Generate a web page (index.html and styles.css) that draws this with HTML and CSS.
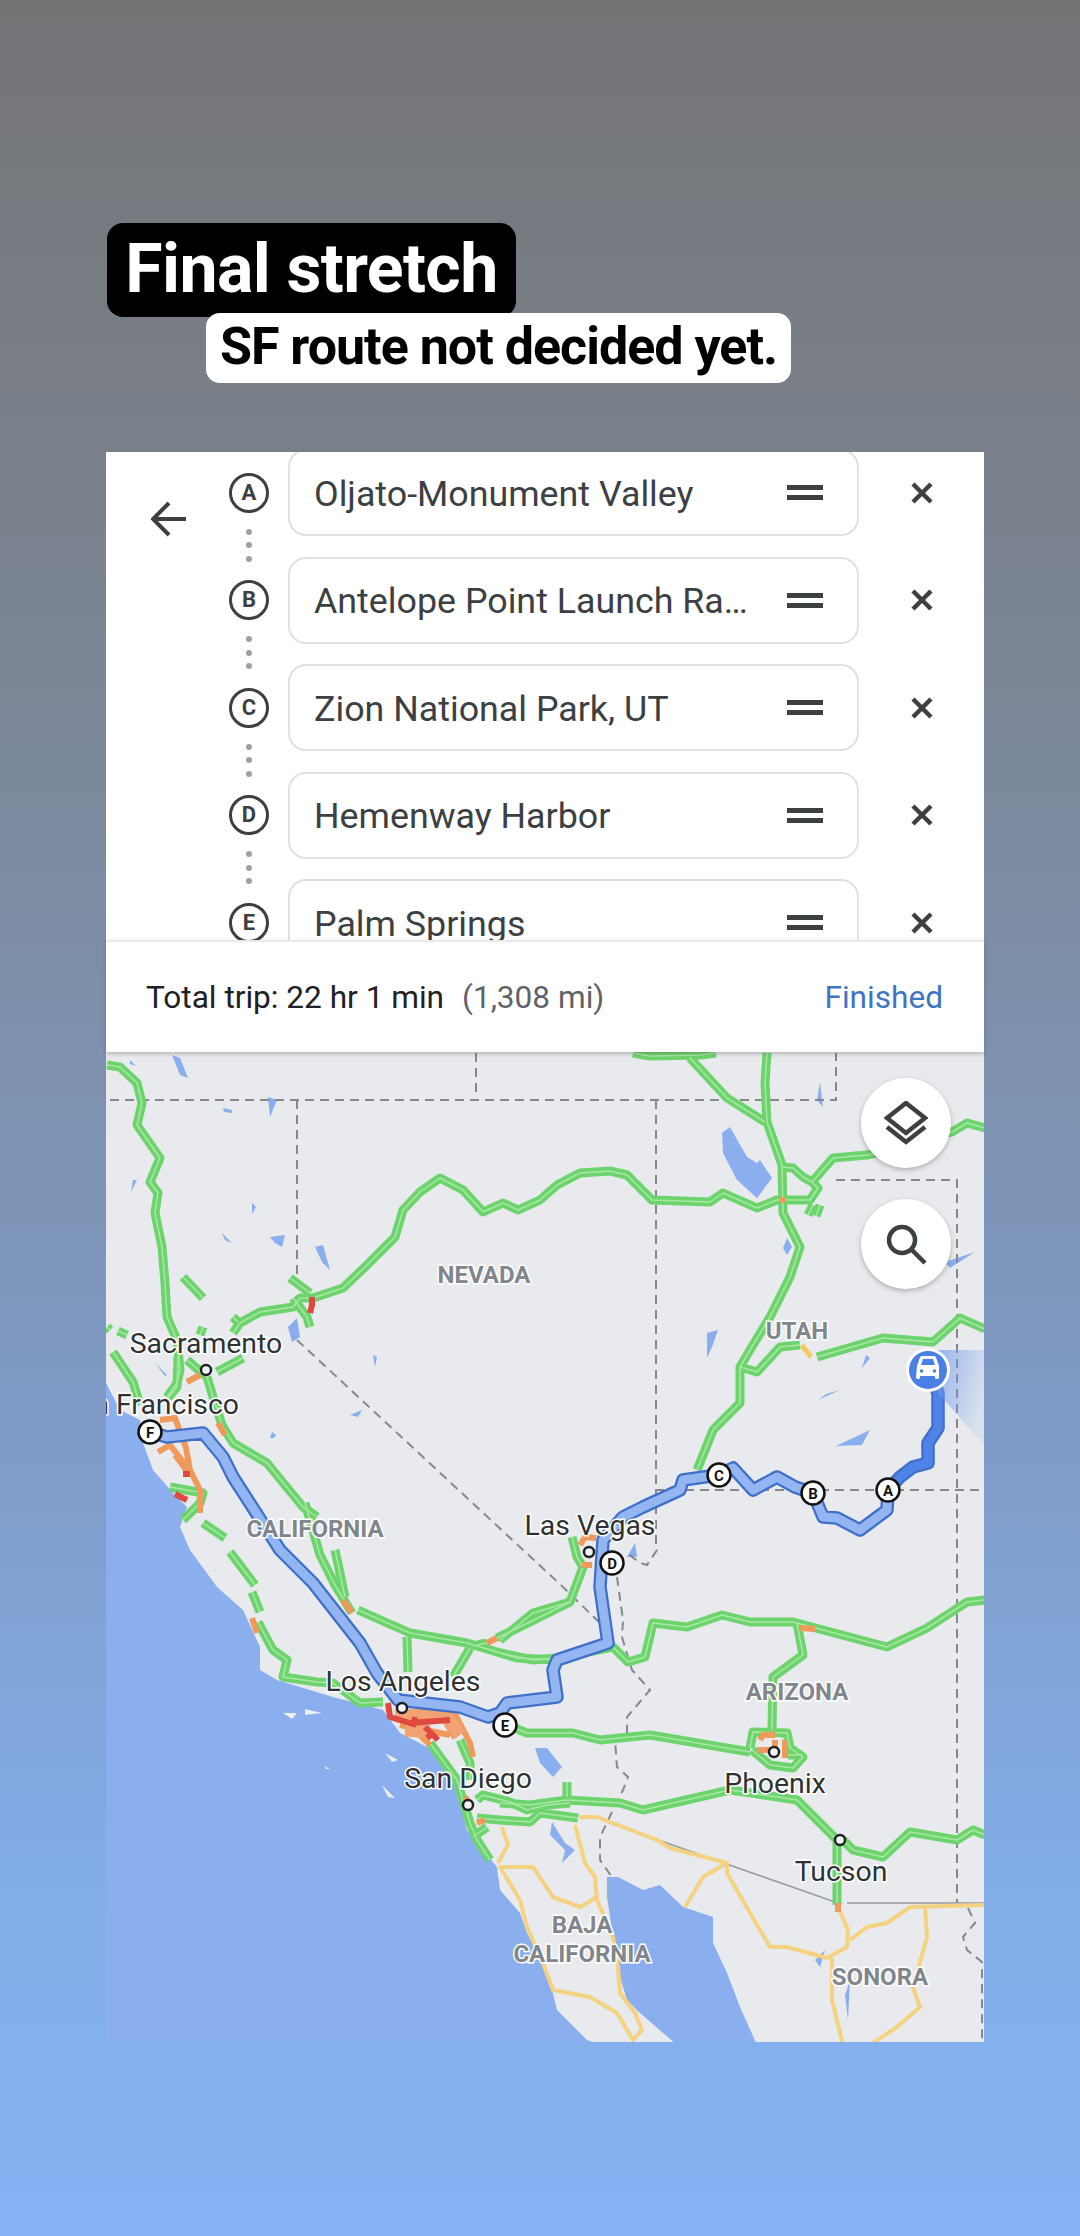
FILE: index.html
```html
<!DOCTYPE html>
<html lang="en">
<head>
<meta charset="utf-8">
<title>Final stretch</title>
<link rel="stylesheet" href="styles.css">
</head>
<body>
<main class="story">
  <h1 class="title">Final stretch</h1>
  <p class="subtitle">SF route not decided yet.</p>
  <section class="panel">
    <div class="planner">
      <div class="back">
        <svg class="back-icon" width="36" height="36" viewBox="0 0 36 36"><path d="M35 18H3M18 2 2 18l16 16"/></svg>
      </div>
      <ul class="rows">
        <li class="row"><span class="stop">A<span class="dots"><i></i><i></i><i></i></span></span><div class="pill"><span class="name">Oljato-Monument Valley</span><span class="drag"></span></div><svg class="remove" width="22" height="22" viewBox="0 0 22 22"><path d="M2 2l18 18M20 2 2 20"/></svg></li>
        <li class="row"><span class="stop">B<span class="dots"><i></i><i></i><i></i></span></span><div class="pill"><span class="name">Antelope Point Launch Ra…</span><span class="drag"></span></div><svg class="remove" width="22" height="22" viewBox="0 0 22 22"><path d="M2 2l18 18M20 2 2 20"/></svg></li>
        <li class="row"><span class="stop">C<span class="dots"><i></i><i></i><i></i></span></span><div class="pill"><span class="name">Zion National Park, UT</span><span class="drag"></span></div><svg class="remove" width="22" height="22" viewBox="0 0 22 22"><path d="M2 2l18 18M20 2 2 20"/></svg></li>
        <li class="row"><span class="stop">D<span class="dots"><i></i><i></i><i></i></span></span><div class="pill"><span class="name">Hemenway Harbor</span><span class="drag"></span></div><svg class="remove" width="22" height="22" viewBox="0 0 22 22"><path d="M2 2l18 18M20 2 2 20"/></svg></li>
        <li class="row"><span class="stop">E</span><div class="pill"><span class="name">Palm Springs</span><span class="drag"></span></div><svg class="remove" width="22" height="22" viewBox="0 0 22 22"><path d="M2 2l18 18M20 2 2 20"/></svg></li>
      </ul>
    </div>
    <div class="summary">
      <p class="trip">Total trip: 22 hr 1 min<span class="dist">(1,308 mi)</span></p>
      <span class="done">Finished</span>
    </div>
    <div class="map">
      <svg class="map-art" width="878" height="990" viewBox="106 1052 878 990">
        <defs>
          <linearGradient id="cone" x1="0" y1="0" x2="1" y2="0.4">
            <stop offset="0" stop-color="#6f9bea" stop-opacity=".75"/>
            <stop offset="1" stop-color="#6f9bea" stop-opacity=".12"/>
          </linearGradient>
          <g id="greens">
            <path d="M107 1065L120 1067 137 1083 142 1103 137 1125 160 1158 150 1182 158 1193 155 1213 162 1247 165 1283 167 1317 177 1340 180 1370 177 1383 167 1397"/>
            <path d="M233 1333L240 1323 260 1312 293 1307 300 1298 313 1298 343 1288 367 1265 395 1237 403 1210 420 1192 440 1178 463 1190 483 1212 503 1203 518 1210 540 1200 557 1185 580 1173 610 1171 627 1175 652 1200 710 1202 723 1193 757 1208 777 1200 810 1200 818 1188 812 1182 803 1177 793 1168 782 1167"/>
            <path d="M767 1053L765 1083 767 1122 782 1165 783 1213 800 1247 790 1277 770 1317 750 1350 740 1367 740 1403 713 1430 697 1470"/>
            <path d="M690 1058L727 1098 765 1122"/>
            <path d="M633 1053L650 1056 700 1055 716 1053"/>
            <path d="M812 1182L833 1158 867 1155 890 1150"/>
            <path d="M930 1138L952 1132 967 1123 985 1128"/>
            <path d="M808 1215L813 1205M816 1216L820 1205"/>
            <path d="M740 1367L757 1372 780 1347 800 1345"/>
            <path d="M817 1357L883 1338 933 1342 960 1318 985 1329"/>
            <path d="M500 1640L533 1613 570 1602 583 1567 577 1557 572 1537"/>
            <path d="M500 1653L533 1660 557 1658 613 1647 628 1662 645 1657 653 1623 687 1627 722 1615 750 1622 793 1622 887 1647 927 1628 967 1602 985 1600"/>
            <path d="M797 1623L803 1655 773 1677 772 1730"/>
            <path d="M507 1725L527 1733 573 1733 600 1740 650 1735 750 1752"/>
            <path d="M750 1748L753 1732 787 1733 790 1748 803 1757 793 1768 770 1765 752 1750"/>
            <path d="M788 1755H802"/>
            <path d="M500 1803L530 1805 567 1800 620 1803 643 1810 673 1803 730 1790 797 1800 837 1840 837 1905"/>
            <path d="M477 1818L500 1820 530 1822 540 1813 578 1818"/>
            <path d="M567 1782V1797"/>
            <path d="M843 1840L853 1850 883 1857 910 1832 957 1840 973 1830 985 1835"/>
            <path d="M113 1352L133 1382 140 1405"/>
            <path d="M178 1357L177 1387 168 1398"/>
            <path d="M187 1360L207 1377M243 1358L217 1372M207 1377L213 1397 222 1425 233 1443 267 1463 303 1507 317 1517"/>
            <path d="M183 1277L203 1298M290 1278L310 1293M293 1298L307 1317 310 1327"/>
            <path d="M107 1327L110 1330M118 1331L127 1335M233 1317L238 1322M203 1327L200 1335"/>
            <path d="M170 1487L203 1493 200 1503 183 1520"/>
            <path d="M203 1523L225 1538M230 1552L255 1585M252 1592L260 1612M258 1622L273 1650 287 1660 283 1677 317 1682 333 1683 360 1703 383 1702"/>
            <path d="M335 1550L345 1597M358 1610L410 1633 467 1643 517 1658 557 1660"/>
            <path d="M305 1503L320 1555 335 1585 352 1613"/>
            <path d="M477 1645L487 1643M497 1638L530 1622 570 1602"/>
            <path d="M407 1637L408 1672M470 1648L453 1677"/>
            <path d="M430 1743L457 1780 462 1797 470 1823 477 1840 490 1860M460 1740L470 1763 470 1780"/>
            <path d="M477 1800L483 1795 510 1802 527 1810 547 1805 570 1803M473 1837L487 1827"/>
          </g>
        </defs>
        <rect class="land" x="106" y="1052" width="878" height="990"/>
        <path class="water" d="M106 1383L120 1410 140 1420 143 1443 153 1470 173 1493 187 1507 180 1527 190 1550 217 1587 243 1610 260 1647 260 1670 277 1680 333 1697 383 1710 400 1733 433 1750 457 1790 467 1830 497 1867 500 1890 520 1913 527 1933 547 1970 557 2010 587 2040 600 2045H106Z"/>
        <path class="water" d="M607 1877L618 1877 643 1890 660 1885 683 1907 713 1917 713 1943 727 1973 740 2007 757 2045H677L640 2013 627 2000 617 1967 613 1937 607 1897Z"/>
        <path class="water" d="M172 1055L180 1058 188 1078 180 1075ZM268 1097L277 1100 270 1117ZM223 1108L232 1110 232 1113 224 1112ZM315 1247L323 1245 330 1270 322 1262ZM270 1237L285 1235 282 1247 275 1243ZM222 1233L232 1243 225 1240ZM288 1327L297 1318 300 1337 292 1342ZM252 1203L256 1207 252 1214ZM133 1180L137 1180 131 1192ZM373 1355L377 1357 375 1367ZM350 1415L362 1410 358 1417ZM272 1432L276 1435 274 1438 270 1438ZM155 1363L167 1375 165 1376ZM535 1748L547 1748 562 1767 553 1777 540 1763ZM722 1133L730 1127 747 1157 757 1163 760 1160 772 1178 757 1198 737 1180 723 1153ZM820 1082L823 1107 817 1100ZM787 1238L792 1247 787 1255 783 1248ZM635 1543L637 1557 627 1557ZM707 1333L718 1330 712 1347 707 1358ZM552 1822L565 1843 575 1850 562 1863 565 1850 550 1835ZM862 1368L870 1358 866 1355ZM836 1446L870 1430 862 1445ZM882 1225L884 1248 881 1246ZM945 1262L975 1252 950 1268ZM818 1400L840 1390 826 1394ZM850 1980L845 1995 848 2020ZM815 1960L825 1950 820 1967ZM570 1985L588 1978 575 1983Z"/>
        <path class="water" d="M130 1060L136 1066 130 1064Z"/>
        <path class="isle" d="M283 1713L297 1713 292 1719ZM305 1709L322 1713 305 1715ZM385 1753L398 1760 392 1762ZM382 1785L395 1798 388 1797ZM324 1766L330 1769 326 1769Z"/>

        <path class="border" d="M110 1100H836V1053M476 1053V1098M297 1100V1277M297 1340L563 1587 604 1627M656 1100V1547L657 1550 647 1565 640 1563 627 1553M617 1577L623 1620 622 1637 632 1670 650 1690 627 1717 627 1737 615 1740 617 1767 628 1777 623 1790 613 1810 600 1837 600 1860 612 1877M836 1180H957V1903M655 1490H985M968 1908L975 1923 963 1937 967 1950 982 1962 982 2040"/>
        <path class="national" d="M607 1822L835 1902M847 1903H985"/>

        <path class="yellow" d="M579 1817H597L610 1822 657 1840 670 1848 727 1863 703 1877 685 1907M727 1863V1873L750 1913 770 1947 787 1947 827 1958 847 1947 848 1930 838 1907M850 1940L867 1927 887 1923 910 1907 985 1905M925 1907L927 1937 913 1987 920 2007 897 2027 870 2045M832 1958V2000L843 2045M575 1825L585 1863 595 1877 597 1900 613 1937 618 1967 620 1993 635 2013 642 2030 633 2040 617 2013 590 1997 553 1990 543 1963 527 1927 520 1900 500 1867 533 1867 553 1897 580 1907 597 1897M502 1827L508 1845 498 1863"/>

        <use href="#greens" class="road"/>
        <use href="#greens" class="road-core"/>

        <path class="orange" d="M800 1628L815 1629M780 1200H786M187 1382L200 1375M218 1423L225 1435M160 1420L175 1418 186 1448 190 1470 200 1490 200 1513M158 1452L170 1445 187 1467M175 1455L190 1475M252 1618L257 1633M343 1600L352 1613M487 1643L497 1638M453 1710L470 1743 473 1757M400 1725L450 1735M420 1735L430 1745M440 1712L455 1738M465 1797L470 1804M477 1823L485 1820M757 1750H772M760 1740L763 1735H775M785 1740V1758M775 1740V1752M838 1903V1912M580 1545L585 1537 596 1538M582 1565H592"/>
        <path class="orange-soft" d="M395 1716L445 1714 460 1735M405 1730L430 1732"/>
        <path class="red" d="M388 1703L390 1717 410 1723 450 1720M415 1717L413 1727M425 1727L438 1740M427 1738L431 1735M183 1474H190M175 1494L187 1500M312 1297V1305L310 1313M602 1542H608"/>
        <path class="amber" d="M802 1345L807 1352 811 1357"/>

        <path class="route-edge" d="M888 1490L887 1510 860 1530 837 1518 823 1517 813 1493 795 1487 777 1477 753 1490 733 1468 718 1475 683 1480 680 1490 643 1507 623 1517 603 1540 600 1587 608 1643 557 1660 553 1670 557 1697 507 1703 500 1713 488 1717 460 1707 398 1700 377 1673 360 1643 313 1583 280 1550 233 1477 223 1457 203 1433 167 1437 150 1432"/>
        <path class="route" d="M888 1490L887 1510 860 1530 837 1518 823 1517 813 1493 795 1487 777 1477 753 1490 733 1468 718 1475 683 1480 680 1490 643 1507 623 1517 603 1540 600 1587 608 1643 557 1660 553 1670 557 1697 507 1703 500 1713 488 1717 460 1707 398 1700 377 1673 360 1643 313 1583 280 1550 233 1477 223 1457 203 1433 167 1437 150 1432"/>
        <path class="route-edge" d="M930 1372L938 1393V1428L928 1443V1463L913 1467 900 1477 888 1490"/>
        <path class="route-near" d="M930 1372L938 1393V1428L928 1443V1463L913 1467 900 1477 888 1490"/>

        <polygon class="cone" points="930,1350 985,1350 985,1446 938,1393"/>

        <text class="state" x="484" y="1283">NEVADA</text>
        <text class="state" x="315" y="1537">CALIFORNIA</text>
        <text class="state" x="797" y="1339">UTAH</text>
        <text class="state" x="797" y="1700">ARIZONA</text>
        <text class="state" x="582" y="1933">BAJA</text>
        <text class="state" x="582" y="1962">CALIFORNIA</text>
        <text class="state" x="880" y="1985">SONORA</text>

        <text class="city" x="206" y="1353">Sacramento</text>
        <text class="city city-end" x="239" y="1414">San Francisco</text>
        <text class="city" x="590" y="1535">Las Vegas</text>
        <text class="city" x="403" y="1691">Los Angeles</text>
        <text class="city" x="468" y="1788">San Diego</text>
        <text class="city" x="775" y="1793">Phoenix</text>
        <text class="city" x="841" y="1881">Tucson</text>

        <circle class="town" cx="206" cy="1370" r="5"/>
        <circle class="town" cx="402" cy="1708" r="5"/>
        <circle class="town" cx="468" cy="1805" r="5"/>
        <circle class="town" cx="589" cy="1552" r="5"/>
        <circle class="town" cx="774" cy="1752" r="5"/>
        <circle class="town" cx="840" cy="1840" r="5"/>

        <circle class="pin" cx="888" cy="1490" r="11.5"/><text class="pin-label" x="888" y="1495.5">A</text>
        <circle class="pin" cx="813" cy="1493" r="11.5"/><text class="pin-label" x="813" y="1498.5">B</text>
        <circle class="pin" cx="719" cy="1475" r="11.5"/><text class="pin-label" x="719" y="1480.5">C</text>
        <circle class="pin" cx="612" cy="1563" r="11.5"/><text class="pin-label" x="612" y="1568.5">D</text>
        <circle class="pin" cx="505" cy="1725" r="11.5"/><text class="pin-label" x="505" y="1730.5">E</text>
        <circle class="pin" cx="150" cy="1432" r="11.5"/><text class="pin-label" x="150" y="1437.5">F</text>

        <circle class="car-halo" cx="928" cy="1370" r="22"/>
        <circle class="car-disc" cx="928" cy="1370" r="19"/>
        <path class="car" d="M917 1366l3-8.500c.3-1 1.200-1.500 2.200-1.500h11.600c1 0 1.900.5 2.200 1.500l3 8.500v11.500c0 .8-.7 1.500-1.500 1.500h-1c-.8 0-1.500-.7-1.500-1.500V1376h-15v1.500c0 .8-.7 1.500-1.500 1.500h-1c-.8 0-1.500-.7-1.500-1.500z"/>
        <path class="car-glass" d="M921 1365l2-6h10l2 6z"/>
        <circle class="car-disc" cx="921.5" cy="1371" r="1.8"/>
        <circle class="car-disc" cx="934.5" cy="1371" r="1.8"/>
      </svg>
      <button class="fab fab-layers" type="button">
        <svg width="44" height="44" viewBox="0 0 44 44"><path d="M22 2 41 17 22 32 3 17zM3 26l19 15 19-15"/></svg>
      </button>
      <button class="fab fab-search" type="button">
        <svg width="44" height="44" viewBox="0 0 44 44"><circle cx="18" cy="18" r="13"/><path d="M27.5 27.5 41 41"/></svg>
      </button>
    </div>
  </section>
</main>
</body>
</html>
```
FILE: styles.css
```css
* { box-sizing: border-box; }
html, body { margin: 0; padding: 0; }
body { font-family: Roboto, "Liberation Sans", sans-serif; }

.story {
  width: 1080px;
  height: 2236px;
  overflow: hidden;
  padding-top: 223px;
  display: flex;
  flex-direction: column;
  align-items: flex-start;
  background: linear-gradient(180deg, #737476 0%, #7a808a 20%, #7d8ca3 40%, #7f9cc8 65%, #83aee9 85%, #85b2f3 100%);
}

.title {
  margin: 0 0 0 107px;
  width: 409px;
  height: 94px;
  border-radius: 16px;
  background: #000;
  color: #fff;
  font-size: 68px;
  font-weight: 700;
  letter-spacing: -0.6px;
  line-height: 92px;
  text-align: center;
  white-space: nowrap;
}

.subtitle {
  position: relative;
  margin: -4px 0 0 206px;
  width: 585px;
  height: 70px;
  border-radius: 14px;
  background: #fff;
  color: #000;
  font-size: 52px;
  font-weight: 700;
  letter-spacing: -1px;
  line-height: 68px;
  text-align: center;
  white-space: nowrap;
}

.panel {
  margin: 69px 0 0 106px;
  width: 878px;
  background: #fff;
  display: flex;
  flex-direction: column;
}

.planner {
  height: 488px;
  overflow: hidden;
  display: flex;
}

.back { width: 123px; padding: 49px 0 0 45px; flex: none; }
.back-icon { display: block; fill: none; stroke: #3c4043; stroke-width: 4; }

.rows {
  list-style: none;
  margin: -3px 0 0;
  padding: 0;
  display: flex;
  flex-direction: column;
  gap: 20.5px;
}

.row { height: 87px; flex: none; display: flex; align-items: center; }

.stop {
  position: relative;
  width: 40px;
  height: 40px;
  flex: none;
  border: 3px solid #3c4043;
  border-radius: 50%;
  color: #3c4043;
  font-size: 22px;
  font-weight: 700;
  line-height: 34px;
  text-align: center;
}

.dots {
  position: absolute;
  left: 14px;
  top: 53px;
  display: flex;
  flex-direction: column;
  gap: 7.5px;
}
.dots i { display: block; width: 6px; height: 6px; border-radius: 50%; background: #9aa0a6; }

.pill {
  margin-left: 19px;
  width: 571px;
  height: 87px;
  flex: none;
  padding: 0 34px 0 24px;
  border: 2px solid #dfe1e5;
  border-radius: 18px;
  display: flex;
  align-items: center;
  justify-content: space-between;
}

.name { padding-top: 2px; color: #3c4043; font-size: 35.8px; white-space: nowrap; }

.drag {
  width: 36px;
  height: 15px;
  flex: none;
  border-top: 5px solid #3c4043;
  border-bottom: 5px solid #3c4043;
}

.remove { margin-left: 52px; flex: none; fill: none; stroke: #3c4043; stroke-width: 4.5; }

.summary {
  position: relative;
  z-index: 1;
  height: 112px;
  padding: 0 41px 0 40px;
  border-top: 2px solid #e8eaed;
  background: #fff;
  box-shadow: 0 2px 4px rgba(60, 64, 67, .3);
  display: flex;
  align-items: center;
  justify-content: space-between;
}

.trip { margin: 0; color: #202124; font-size: 31.6px; }
.dist { margin-left: 18px; color: #5f6368; }
.done { color: #3f74c4; font-size: 31.6px; }

.map { position: relative; height: 990px; }
.map-art { display: block; }

.land { fill: #e8eaed; }
.water { fill: #8aaeee; }
.isle { fill: #eceef0; }
.border { fill: none; stroke: #85888d; stroke-width: 2; stroke-dasharray: 9 6; }
.national { fill: none; stroke: #9a9ca0; stroke-width: 1.5; }
.yellow { fill: none; stroke: #f5d27f; stroke-width: 4; stroke-linejoin: round; }
.road { fill: none; stroke: #6dd46d; stroke-width: 9; stroke-linejoin: round; }
.road-core { fill: none; stroke: #a9e8a4; stroke-width: 1.5; stroke-linejoin: round; }
.orange { fill: none; stroke: #ef9a5b; stroke-width: 6; stroke-linejoin: round; }
.orange-soft { fill: none; stroke: #f2a273; stroke-width: 13; stroke-linejoin: round; }
.red { fill: none; stroke: #e0493f; stroke-width: 6; stroke-linejoin: round; }
.amber { fill: none; stroke: #f5c95c; stroke-width: 5; }
.route-edge { fill: none; stroke: #3f6fc8; stroke-width: 13.5; stroke-linejoin: round; }
.route { fill: none; stroke: #93b6f2; stroke-width: 9; stroke-linejoin: round; }
.route-near { fill: none; stroke: #4f83e8; stroke-width: 9; stroke-linejoin: round; }
.cone { fill: url(#cone); }

.state {
  fill: #80868b;
  stroke: #fff;
  stroke-width: 3px;
  paint-order: stroke;
  font-size: 24px;
  font-weight: 700;
  text-anchor: middle;
}

.city {
  fill: #2f3235;
  stroke: #fff;
  stroke-width: 3px;
  paint-order: stroke;
  font-size: 28.4px;
  text-anchor: middle;
}
.city-end { text-anchor: end; }

.town { fill: #f1f3f4; stroke: #202124; stroke-width: 2.5; }
.pin { fill: #fff; stroke: #111; stroke-width: 2.5; }
.pin-label { fill: #111; font-size: 15px; font-weight: 700; text-anchor: middle; }
.car-halo { fill: #fff; }
.car-disc { fill: #4a7fe6; }
.car { fill: #fff; }
.car-glass { fill: #4a7fe6; }

.fab {
  position: absolute;
  left: 755px;
  width: 90px;
  height: 90px;
  padding: 0;
  border: 0;
  border-radius: 50%;
  background: #fff;
  box-shadow: 0 2px 5px rgba(60, 64, 67, .35);
  display: flex;
  align-items: center;
  justify-content: center;
}
.fab svg { fill: none; stroke: #3c4043; stroke-width: 4.5; }
.fab-layers { top: 26px; }
.fab-search { top: 147px; }
```
